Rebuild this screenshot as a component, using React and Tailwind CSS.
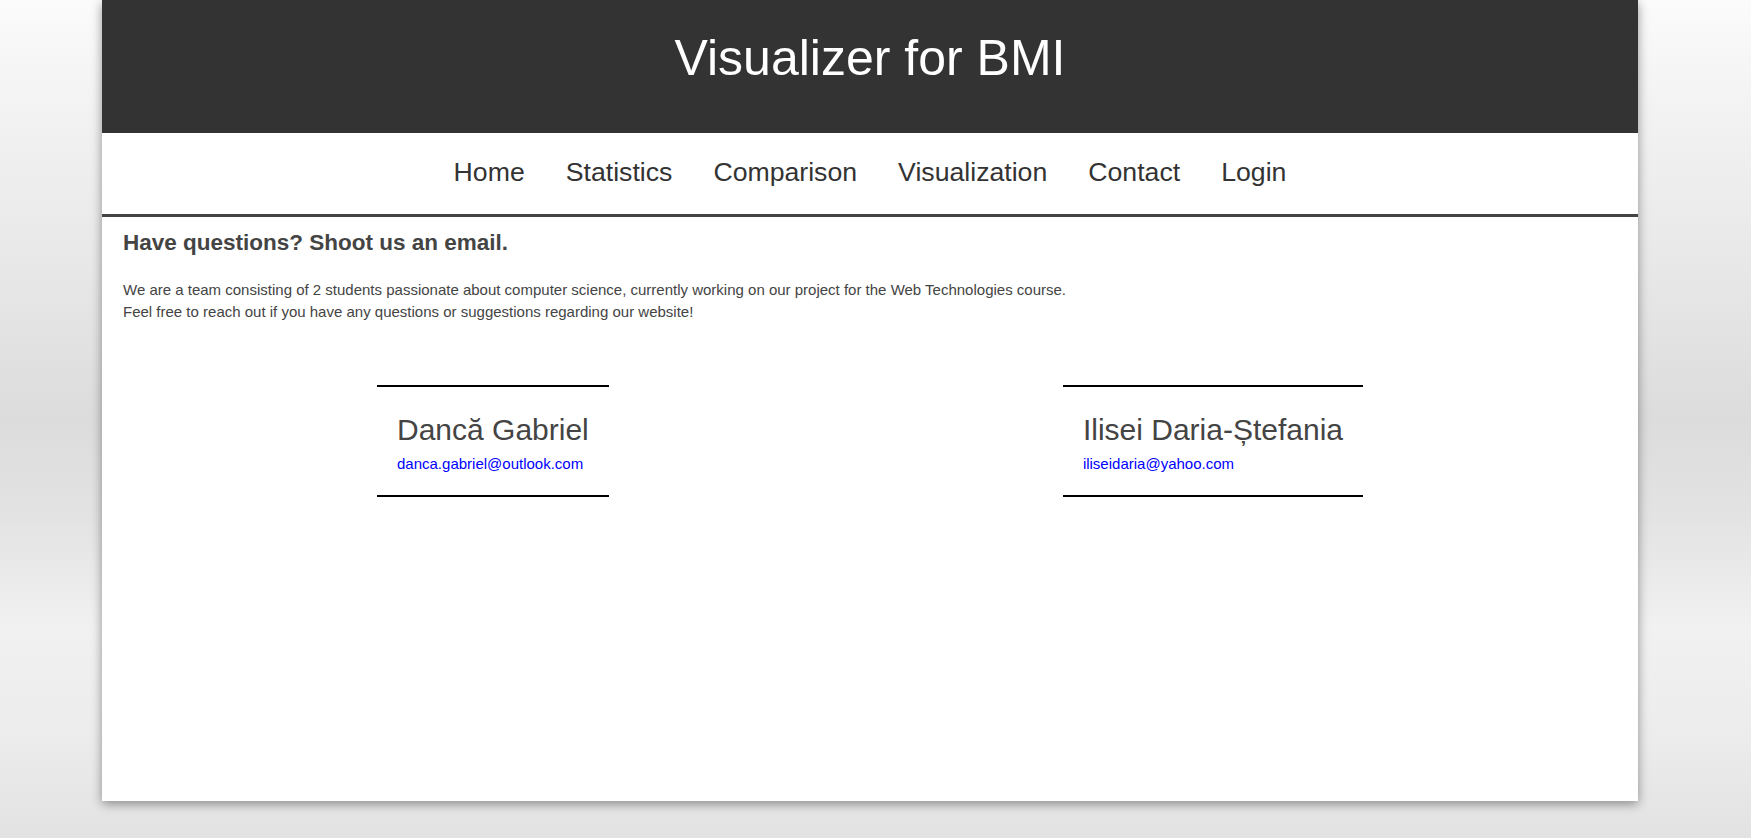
export default function App() {
  const links = ["Home", "Statistics", "Comparison", "Visualization", "Contact", "Login"];
  return (
    <div className="min-h-[838px] w-full overflow-hidden bg-[linear-gradient(to_bottom,#fbfbfb_0%,#f3f3f3_12%,#e7e7e7_33%,#dcdcdc_50%,#e3e3e3_62%,#f1f1f1_75%,#ececec_88%,#e2e2e2_100%)] font-['Liberation_Sans',Arial,sans-serif]">
      <div className="ml-[102px] w-[1536px] h-[801px] bg-white shadow-[0_3px_10px_rgba(0,0,0,0.4)] flex flex-col">
        <header className="h-[133px] shrink-0 bg-[#333333] pt-[29px] text-center">
          <h1 className="text-[50px] leading-[58px] text-white font-normal">Visualizer for BMI</h1>
        </header>
        <nav className="h-[84px] shrink-0 border-b-[3px] border-[#444444] pb-[2px] flex items-center justify-center gap-[41px] text-[26.67px] leading-[31px] text-[#333333]">
          {links.map((l) => (
            <a key={l} className="cursor-pointer">{l}</a>
          ))}
        </nav>
        <main className="px-[21px] text-[#444444]">
          <h2 className="mt-[13px] text-[22.5px] leading-[26px] font-bold">Have questions? Shoot us an email.</h2>
          <p className="mt-[23px] text-[15px] leading-[22px]">
            We are a team consisting of 2 students passionate about computer science, currently working on our project for the Web Technologies course.
            <br />
            Feel free to reach out if you have any questions or suggestions regarding our website!
          </p>
          <div className="mt-[62px] flex justify-between px-[254px]">
            <Card name="Dancă Gabriel" email="danca.gabriel@outlook.com" />
            <Card name="Ilisei Daria-Ștefania" email="iliseidaria@yahoo.com" />
          </div>
        </main>
      </div>
    </div>
  );
}

function Card({ name, email }) {
  return (
    <div className="border-t-2 border-b-2 border-black px-[20px] pt-[26px] pb-[23px]">
      <div className="text-[30px] leading-[34px] text-[#444444]">{name}</div>
      <a className="mt-[8px] block text-[15px] leading-[17px] text-[#0000ff] cursor-pointer">{email}</a>
    </div>
  );
}
